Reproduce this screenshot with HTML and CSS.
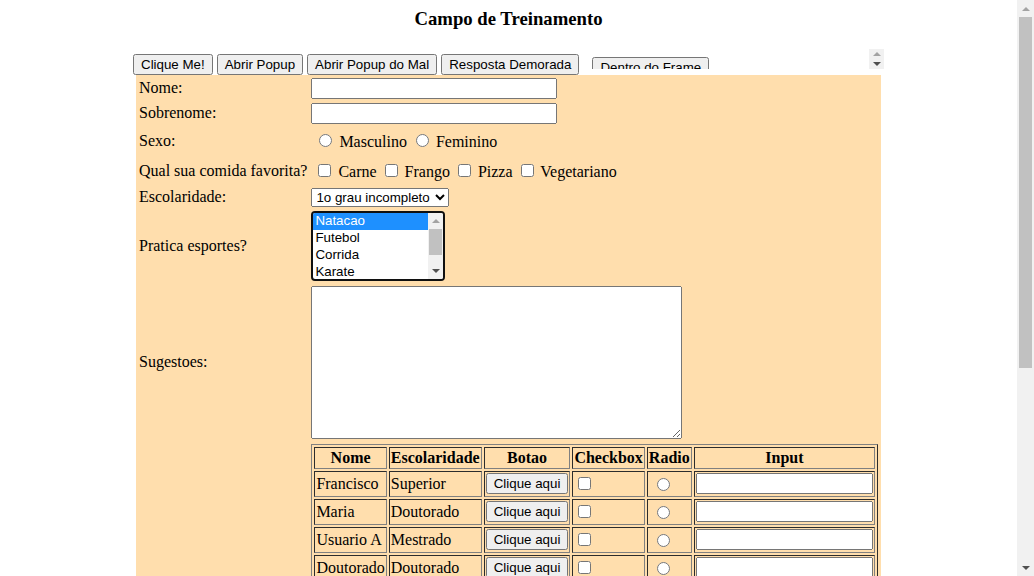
FILE: index.html
```html
<!DOCTYPE html>
<html lang="pt">
<head>
  <meta charset="UTF-8" />
  <meta name="viewport" content="width=device-width, initial-scale=1.0"/>
  <title>Campo de Treinamento</title>
  <link rel="stylesheet" href="styles.css">
</head>
<body>
  <div class="window">
    <div class="viewport">
      <h3 class="title">Campo de Treinamento</h3>
      <div class="page">
        <div class="toolbar">
          <input type="button" value="Clique Me!" id="buttonSimple" />
          <input type="button" value="Abrir Popup" id="buttonPopUpEasy" />
          <input type="button" value="Abrir Popup do Mal" id="buttonPopUpHard" />
          <input type="button" value="Resposta Demorada" id="buttonDelay" />
          <div class="frame" id="frame1">
            <div class="frame-inner">
              <div class="frame-body"><input type="button" value="Dentro do Frame" id="frameButton" /></div>
              <div class="scrollbar frame-scroll">
                <span class="arrow up"></span>
                <span class="arrow down"></span>
              </div>
            </div>
          </div>
        </div>

        <form id="elementosForm">
          <table class="form-table">
            <tr>
              <td class="label">Nome:</td>
              <td><input type="text" class="text" id="nome" /></td>
            </tr>
            <tr>
              <td class="label">Sobrenome:</td>
              <td><input type="text" class="text" id="sobrenome" /></td>
            </tr>
            <tr>
              <td class="label">Sexo:</td>
              <td>
                <table class="choices">
                  <tr>
                    <td><input type="radio" name="sexo" id="sexo0" /> <label for="sexo0">Masculino</label></td>
                    <td><input type="radio" name="sexo" id="sexo1" /> <label for="sexo1">Feminino</label></td>
                  </tr>
                </table>
              </td>
            </tr>
            <tr>
              <td class="label">Qual sua comida favorita?</td>
              <td>
                <table class="choices">
                  <tr>
                    <td><input type="checkbox" id="comida0" /> <label for="comida0">Carne</label></td>
                    <td><input type="checkbox" id="comida1" /> <label for="comida1">Frango</label></td>
                    <td><input type="checkbox" id="comida2" /> <label for="comida2">Pizza</label></td>
                    <td><input type="checkbox" id="comida3" /> <label for="comida3">Vegetariano</label></td>
                  </tr>
                </table>
              </td>
            </tr>
            <tr>
              <td class="label">Escolaridade:</td>
              <td>
                <select class="escolaridade" id="escolaridade">
                  <option>1o grau incompleto</option>
                  <option>1o grau completo</option>
                  <option>2o grau incompleto</option>
                  <option>2o grau completo</option>
                  <option>Superior</option>
                  <option>Mestrado</option>
                  <option>Doutorado</option>
                  <option>Especializacao</option>
                </select>
              </td>
            </tr>
            <tr>
              <td class="label">Pratica esportes?</td>
              <td>
                <div class="listbox" id="esportes" role="listbox">
                  <div class="listbox-options">
                    <div class="option selected">Natacao</div>
                    <div class="option">Futebol</div>
                    <div class="option">Corrida</div>
                    <div class="option">Karate</div>
                    <div class="option">O que eh esporte?</div>
                  </div>
                  <div class="scrollbar list-scroll">
                    <span class="arrow up"></span>
                    <span class="track"><span class="thumb"></span></span>
                    <span class="arrow down"></span>
                  </div>
                </div>
              </td>
            </tr>
            <tr>
              <td class="label">Sugestoes:</td>
              <td><textarea class="sugestoes" id="sugestoes"></textarea></td>
            </tr>
            <tr>
              <td class="label"></td>
              <td>
                <table class="users" id="tabelaUsuarios">
                  <tr>
                    <th>Nome</th>
                    <th>Escolaridade</th>
                    <th>Botao</th>
                    <th>Checkbox</th>
                    <th>Radio</th>
                    <th class="input-col">Input</th>
                  </tr>
                  <tr>
                    <td>Francisco</td>
                    <td>Superior</td>
                    <td><input type="button" value="Clique aqui" /></td>
                    <td><input type="checkbox" /></td>
                    <td><input type="radio" class="radio" name="u1" /></td>
                    <td><input type="text" class="cell-input" /></td>
                  </tr>
                  <tr>
                    <td>Maria</td>
                    <td>Doutorado</td>
                    <td><input type="button" value="Clique aqui" /></td>
                    <td><input type="checkbox" /></td>
                    <td><input type="radio" class="radio" name="u2" /></td>
                    <td><input type="text" class="cell-input" /></td>
                  </tr>
                  <tr>
                    <td>Usuario A</td>
                    <td>Mestrado</td>
                    <td><input type="button" value="Clique aqui" /></td>
                    <td><input type="checkbox" /></td>
                    <td><input type="radio" class="radio" name="u3" /></td>
                    <td><input type="text" class="cell-input" /></td>
                  </tr>
                  <tr>
                    <td>Doutorado</td>
                    <td>Doutorado</td>
                    <td><input type="button" value="Clique aqui" /></td>
                    <td><input type="checkbox" /></td>
                    <td><input type="radio" class="radio" name="u4" /></td>
                    <td><input type="text" class="cell-input" /></td>
                  </tr>
                  <tr>
                    <td>Usuario B</td>
                    <td>Superior</td>
                    <td><input type="button" value="Clique aqui" /></td>
                    <td><input type="checkbox" /></td>
                    <td><input type="radio" class="radio" name="u5" /></td>
                    <td><input type="text" class="cell-input" /></td>
                  </tr>
                </table>
              </td>
            </tr>
            <tr>
              <td colspan="2"><input type="submit" value="Cadastrar" id="cadastrar" /></td>
            </tr>
          </table>
        </form>

        <div class="resultado" id="resultado">
          <a href="#" id="linkVoltar">Voltar</a>
        </div>
      </div>
    </div>

    <div class="scrollbar page-scroll">
      <span class="arrow up"></span>
      <span class="track"><span class="thumb"></span></span>
      <span class="arrow down"></span>
    </div>
  </div>
</body>
</html>
```

FILE: styles.css
```css
body {
  margin: 0;
  font-family: "Liberation Serif", "Times New Roman", serif;
  font-size: 16px;
}
input, select, textarea, button {
  font-family: "Liberation Sans", Arial, sans-serif;
}
.window {
  display: flex;
  height: 100vh;
  overflow: hidden;
}
.viewport {
  flex: 1;
  padding: 8px;
  overflow: hidden;
}
.title {
  margin-top: 0;
  text-align: center;
}
.page {
  width: 751px;
  margin: 0 auto;
}
.toolbar {
  white-space: nowrap;
}

/* fake iframe */
.frame {
  display: inline-block;
  width: 300px;
  height: 20px;
  margin-left: 1px;
  overflow: hidden;
}
.frame-inner {
  display: flex;
  height: 100%;
}
.frame-body {
  flex: 1;
  padding: 8px;
}

/* scrollbars */
.scrollbar {
  display: flex;
  flex-direction: column;
  flex: none;
  background: #f1f1f1;
}
.scrollbar .arrow {
  display: flex;
  align-items: center;
  justify-content: center;
  flex: none;
}
.scrollbar .arrow::before {
  content: "";
  border-left: 4px solid transparent;
  border-right: 4px solid transparent;
}
.scrollbar .up::before {
  border-bottom: 4px solid #a3a3a3;
}
.scrollbar .down::before {
  border-top: 4px solid #505050;
}
.scrollbar .track {
  flex: 1;
}
.scrollbar .thumb {
  display: block;
  background: #c1c1c1;
}
.page-scroll {
  width: 17px;
}
.page-scroll .arrow {
  height: 17px;
}
.page-scroll .thumb {
  height: 351px;
  margin: 0 2px;
}
.frame-scroll {
  width: 15px;
}
.frame-scroll .arrow {
  height: 10px;
}
.list-scroll {
  width: 15px;
}
.list-scroll .arrow {
  height: 16px;
}
.list-scroll .thumb {
  height: 26px;
  margin: 0 1px;
}

/* form */
.form-table {
  width: 745px;
  margin-left: 3px;
  background: #ffdead;
}
.label {
  width: 168px;
  white-space: nowrap;
}
.text {
  width: 246px;
  box-sizing: border-box;
}
.escolaridade {
  width: 138px;
}
.listbox {
  display: flex;
  width: 134px;
  height: 70px;
  box-sizing: border-box;
  border: 2px solid #101010;
  border-radius: 4px;
  background: #ffffff;
  overflow: hidden;
  font-family: "Liberation Sans", Arial, sans-serif;
  font-size: 13.333px;
}
.listbox-options {
  flex: 1;
  overflow: hidden;
}
.option {
  height: 17px;
  line-height: 16px;
  padding: 0 2px;
  white-space: nowrap;
}
.option.selected {
  background: #1e90ff;
  color: #ffffff;
}
.sugestoes {
  display: block;
  width: 371px;
  height: 153px;
  margin: 1px 0;
  box-sizing: border-box;
}

/* users table */
.users {
  width: 100%;
  border: 1px outset gray;
}
.users > tbody > tr > th,
.users > tbody > tr > td {
  border: 1px inset gray;
}
.users > tbody > tr > td {
  box-sizing: border-box;
  height: 26px;
}
.users .input-col {
  width: 100%;
}
.users .radio {
  margin-left: 8px;
  vertical-align: -2px;
}
.cell-input {
  width: 100%;
  box-sizing: border-box;
}
.resultado {
  padding-top: 16px;
}
```
